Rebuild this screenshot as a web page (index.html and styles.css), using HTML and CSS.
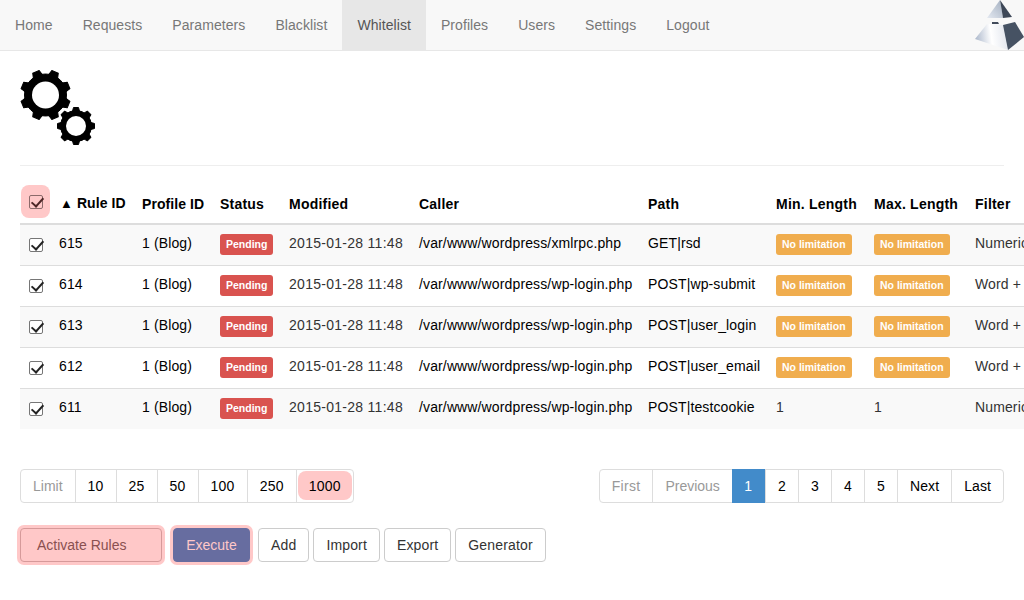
FILE: index.html
```html
<!DOCTYPE html>
<html lang="en">
<head>
  <meta charset="UTF-8" />
  <title>Whitelist</title>
  <link rel="stylesheet" href="styles.css">
</head>
<body>
  <nav class="navbar">
    <ul class="nav">
      <li><a href="#">Home</a></li>
      <li><a href="#">Requests</a></li>
      <li><a href="#">Parameters</a></li>
      <li><a href="#">Blacklist</a></li>
      <li class="active"><a href="#">Whitelist</a></li>
      <li><a href="#">Profiles</a></li>
      <li><a href="#">Users</a></li>
      <li><a href="#">Settings</a></li>
      <li><a href="#">Logout</a></li>
    </ul>
    <svg class="logo" width="50" height="50" viewBox="0 0 50 50">
      <defs>
        <linearGradient id="topSide" x1="1" y1="0" x2="0" y2="1">
          <stop offset="0" stop-color="#a3afc0"/>
          <stop offset="1" stop-color="#e4e9f1"/>
        </linearGradient>
        <linearGradient id="lowSide" x1="0" y1="0.6" x2="1" y2="0.5">
          <stop offset="0" stop-color="#aab6ca"/>
          <stop offset="0.5" stop-color="#ffffff"/>
          <stop offset="1" stop-color="#e2e6ee"/>
        </linearGradient>
      </defs>
      <polygon points="26,0 13,18 29,18" fill="url(#topSide)"/>
      <polygon points="26,0 29,18 38,17" fill="#3d4757"/>
      <polygon points="13,24 29,25 34,50 1,39" fill="url(#lowSide)"/>
      <polygon points="18,22 24,22 25,24 18,24" fill="#414b5b"/>
      <polygon points="29,25 41,22 50,37 34,50" fill="#465263"/>
    </svg>
  </nav>

  <main class="content">
    <svg class="gears" width="76" height="76" viewBox="0 0 76 76">
      <g transform="translate(25.5 25)" fill="#000" stroke="#000" stroke-linejoin="round">
        <circle r="21"/>
        <polygon points="-3.5,-25 3.5,-25 10,0 3.5,25 -3.5,25 -10,0" transform="rotate(22.5)"/>
        <polygon points="-3.5,-25 3.5,-25 10,0 3.5,25 -3.5,25 -10,0" transform="rotate(67.5)"/>
        <polygon points="-3.5,-25 3.5,-25 10,0 3.5,25 -3.5,25 -10,0" transform="rotate(112.5)"/>
        <polygon points="-3.5,-25 3.5,-25 10,0 3.5,25 -3.5,25 -10,0" transform="rotate(157.5)"/>
        <circle r="13.5" fill="#fff" stroke="none"/>
      </g>
      <g transform="translate(56 56)" fill="#000" stroke="#000" stroke-linejoin="round">
        <circle r="15.5"/>
        <polygon points="-2.5,-18.5 2.5,-18.5 7.5,0 2.5,18.5 -2.5,18.5 -7.5,0"/>
        <polygon points="-2.5,-18.5 2.5,-18.5 7.5,0 2.5,18.5 -2.5,18.5 -7.5,0" transform="rotate(45)"/>
        <polygon points="-2.5,-18.5 2.5,-18.5 7.5,0 2.5,18.5 -2.5,18.5 -7.5,0" transform="rotate(90)"/>
        <polygon points="-2.5,-18.5 2.5,-18.5 7.5,0 2.5,18.5 -2.5,18.5 -7.5,0" transform="rotate(135)"/>
        <circle r="10" fill="#fff" stroke="none"/>
      </g>
    </svg>
    <hr class="rule">

    <div class="table-wrap">
      <table class="rules">
        <colgroup>
          <col class="c-check"><col class="c-rule"><col class="c-profile"><col class="c-status"><col class="c-modified"><col class="c-caller"><col class="c-path"><col class="c-min"><col class="c-max"><col class="c-filter">
        </colgroup>
        <thead>
          <tr>
            <th class="check-head"><span class="hl-box"><input type="checkbox" checked></span></th>
            <th class="tight"><span class="arrow">&#9650;</span> Rule ID</th>
            <th class="tight">Profile ID</th>
            <th>Status</th>
            <th>Modified</th>
            <th>Caller</th>
            <th>Path</th>
            <th>Min. Length</th>
            <th>Max. Length</th>
            <th>Filter</th>
          </tr>
        </thead>
        <tbody>
          <tr>
            <td><input type="checkbox" checked></td>
            <td class="dark id">615</td>
            <td class="dark">1 (Blog)</td>
            <td><span class="label danger">Pending</span></td>
            <td class="date">2015-01-28 11:48</td>
            <td class="dark">/var/www/wordpress/xmlrpc.php</td>
            <td class="dark">GET|rsd</td>
            <td><span class="label warn">No limitation</span></td>
            <td><span class="label warn">No limitation</span></td>
            <td>Numeric</td>
          </tr>
          <tr>
            <td><input type="checkbox" checked></td>
            <td class="dark id">614</td>
            <td class="dark">1 (Blog)</td>
            <td><span class="label danger">Pending</span></td>
            <td class="date">2015-01-28 11:48</td>
            <td class="dark">/var/www/wordpress/wp-login.php</td>
            <td class="dark">POST|wp-submit</td>
            <td><span class="label warn">No limitation</span></td>
            <td><span class="label warn">No limitation</span></td>
            <td>Word + Space</td>
          </tr>
          <tr>
            <td><input type="checkbox" checked></td>
            <td class="dark id">613</td>
            <td class="dark">1 (Blog)</td>
            <td><span class="label danger">Pending</span></td>
            <td class="date">2015-01-28 11:48</td>
            <td class="dark">/var/www/wordpress/wp-login.php</td>
            <td class="dark">POST|user_login</td>
            <td><span class="label warn">No limitation</span></td>
            <td><span class="label warn">No limitation</span></td>
            <td>Word + Space</td>
          </tr>
          <tr>
            <td><input type="checkbox" checked></td>
            <td class="dark id">612</td>
            <td class="dark">1 (Blog)</td>
            <td><span class="label danger">Pending</span></td>
            <td class="date">2015-01-28 11:48</td>
            <td class="dark">/var/www/wordpress/wp-login.php</td>
            <td class="dark">POST|user_email</td>
            <td><span class="label warn">No limitation</span></td>
            <td><span class="label warn">No limitation</span></td>
            <td>Word + Space</td>
          </tr>
          <tr>
            <td><input type="checkbox" checked></td>
            <td class="dark id">611</td>
            <td class="dark">1 (Blog)</td>
            <td><span class="label danger">Pending</span></td>
            <td class="date">2015-01-28 11:48</td>
            <td class="dark">/var/www/wordpress/wp-login.php</td>
            <td class="dark">POST|testcookie</td>
            <td>1</td>
            <td>1</td>
            <td>Numeric</td>
          </tr>
        </tbody>
      </table>
    </div>

    <div class="pagers">
      <ul class="pager">
        <li class="off">Limit</li>
        <li class="num">10</li>
        <li class="num">25</li>
        <li class="num">50</li>
        <li class="num">100</li>
        <li class="num">250</li>
        <li class="pick num"><span>1000</span></li>
      </ul>
      <ul class="pager">
        <li class="off first">First</li>
        <li class="off">Previous</li>
        <li class="current num">1</li>
        <li class="num">2</li>
        <li class="num">3</li>
        <li class="num">4</li>
        <li class="num">5</li>
        <li class="word">Next</li>
        <li class="word">Last</li>
      </ul>
    </div>

    <div class="actions">
      <button class="btn btn-activate">Activate Rules</button>
      <button class="btn btn-execute">Execute</button>
      <button class="btn">Add</button>
      <button class="btn">Import</button>
      <button class="btn">Export</button>
      <button class="btn">Generator</button>
    </div>
  </main>
</body>
</html>
```
FILE: styles.css
```css
* {
  box-sizing: border-box;
}
html, body {
  overflow: hidden;
}
body {
  margin: 0;
  height: 600px;
  background-color: #fff;
  color: #333;
  font-family: "Liberation Sans", Arial, sans-serif;
  font-size: 14px;
  line-height: 20px;
}
.navbar {
  display: flex;
  justify-content: space-between;
  height: 51px;
  background-color: #f8f8f8;
  border-bottom: 1px solid #e7e7e7;
}
.nav {
  display: flex;
  margin: 0;
  padding: 0;
  list-style: none;
}
.nav a {
  display: block;
  padding: 15px;
  color: #777;
  letter-spacing: 0.07px;
  text-decoration: none;
}
.nav .active a {
  background-color: #e7e7e7;
  color: #555;
}
.logo {
  flex: none;
}
.content {
  padding: 19px 20px 0;
}
.gears {
  display: block;
}
.rule {
  height: 1px;
  margin: 19px 0 17px;
  border: 0;
  background-color: #eee;
}
.table-wrap {
  margin-right: -20px;
  overflow: hidden;
}
.rules {
  width: 1100px;
  table-layout: fixed;
  border-collapse: collapse;
}
.c-check { width: 32px; }
.c-rule { width: 82px; }
.c-profile { width: 78px; }
.c-status { width: 69px; }
.c-modified { width: 130px; }
.c-caller { width: 229px; }
.c-path { width: 128px; }
.c-min { width: 98px; }
.c-max { width: 101px; }
.c-filter { width: 153px; }
.rules th {
  height: 41px;
  padding: 8px 8px 9px;
  border-bottom: 2px solid #ddd;
  color: #000;
  letter-spacing: 0.22px;
  text-align: left;
  white-space: nowrap;
  vertical-align: bottom;
}
.rules .tight {
  letter-spacing: 0.08px;
}
.rules td {
  height: 41px;
  padding: 8px;
  border-top: 1px solid #ddd;
  letter-spacing: 0.13px;
  white-space: nowrap;
  vertical-align: top;
}
.rules tbody tr:first-child td {
  border-top: 0;
}
.rules tbody tr:nth-child(odd) {
  background-color: #f9f9f9;
}
.rules .dark {
  color: #000;
}
.rules .id {
  padding-left: 7px;
}
.rules .date {
  letter-spacing: 0.28px;
}
.rules input {
  appearance: none;
  display: block;
  position: relative;
  width: 14px;
  height: 14px;
  margin: 5px 0 0 1px;
  border: 1px solid #767676;
  border-radius: 2px;
  background-color: #fff;
}
.rules input::after {
  content: "";
  position: absolute;
  top: -1px;
  left: 4px;
  width: 5px;
  height: 10px;
  border: solid #222;
  border-width: 0 2px 2px 0;
  transform: rotate(42deg);
}
.check-head {
  position: relative;
}
.hl-box {
  position: absolute;
  top: 2px;
  left: 1px;
  width: 29px;
  height: 33px;
  border-radius: 8px;
  background-color: #ffc8c8;
}
.rules .hl-box input {
  margin: 10px 0 0 8px;
  border-color: #8c6a6a;
  background-color: transparent;
}
.rules .hl-box input::after {
  border-color: #4d2626;
}
.arrow {
  font-size: 13px;
}
.label {
  display: block;
  width: fit-content;
  margin-top: 1px;
  padding: 3px 6px;
  border-radius: 3px;
  color: #fff;
  font-size: 10.5px;
  font-weight: bold;
  letter-spacing: 0;
  line-height: 15px;
}
.label.danger {
  background-color: #d9534f;
}
.label.warn {
  background-color: #f0ad4e;
}
.pagers {
  display: flex;
  justify-content: space-between;
  margin-top: 40px;
}
.pager {
  display: flex;
  height: 34px;
  margin: 0;
  padding: 0;
  list-style: none;
  border: 1px solid #ddd;
  border-radius: 4px;
}
.pager li {
  padding: 6px 12px;
  border-left: 1px solid #ddd;
  color: #000;
}
.pager li:first-child {
  border-left: 0;
}
.pager .num {
  letter-spacing: 0.22px;
}
.pager .word {
  letter-spacing: 0.1px;
}
.pager .first {
  letter-spacing: 0.3px;
}
.pager .off {
  color: #999;
}
.pager .current {
  margin: -1px 0;
  padding: 7px 12.5px;
  background-color: #428bca;
  border-left: 0;
  color: #fff;
}
.pager .pick {
  padding: 1px 1px 2px;
}
.pick span {
  display: block;
  height: 29px;
  padding: 5px 11px;
  border-radius: 8px;
  background-color: #ffc8c8;
}
.actions {
  display: flex;
  gap: 4px;
  margin-top: 25px;
}
.btn {
  flex: none;
  height: 34px;
  padding: 6px 12px;
  border: 1px solid #ccc;
  border-radius: 4px;
  background-color: #fff;
  color: #333;
  font: inherit;
  letter-spacing: 0.15px;
}
.btn-activate {
  width: 142px;
  padding-left: 16px;
  margin-right: 7px;
  text-align: left;
  border-color: #d69a9a;
  background-color: #ffc8c8;
  color: #8a5050;
  letter-spacing: 0;
  box-shadow: 0 0 0 3px #ffc8c8;
}
.btn-execute {
  width: 77px;
  padding: 6px 0;
  border-color: #676da0;
  background-color: #676da0;
  color: #ffc8c8;
  letter-spacing: 0;
  box-shadow: 0 0 0 3px #ffc8c8;
  margin-right: 4px;
}
```
